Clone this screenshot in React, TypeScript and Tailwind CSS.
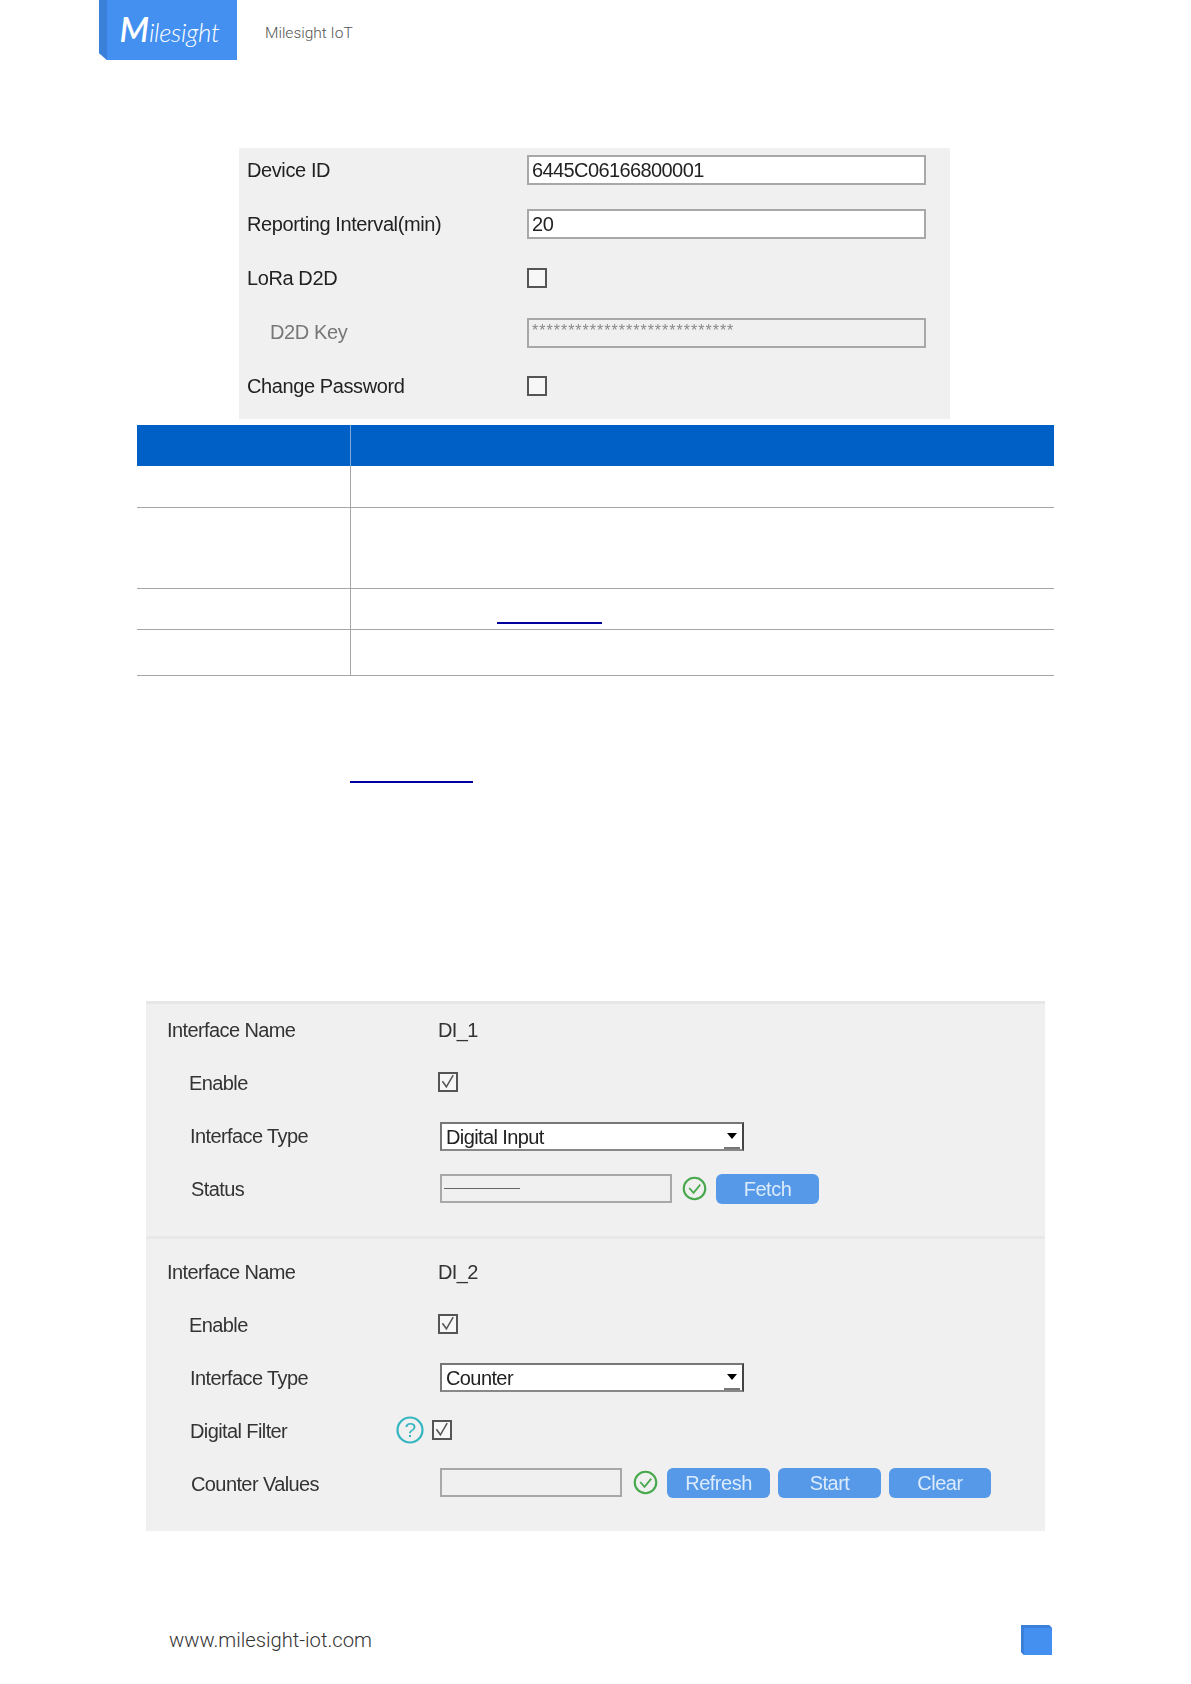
const Checkbox = ({ checked = false }: { checked?: boolean }) => (
  <div className="flex h-[20px] w-[20px] shrink-0 items-center justify-center border-2 border-[#555] bg-[#f7f7f7]">
    {checked && (
      <svg viewBox="0 0 20 20" className="h-[18px] w-[18px]" fill="none" stroke="#555" strokeWidth={1.9}>
        <path d="M3 9l5 7L16.5 1.5" />
      </svg>
    )}
  </div>
);

const OkIcon = () => (
  <svg viewBox="0 0 26 26" className="h-[25px] w-[25px] shrink-0" fill="none" stroke="#47a84c">
    <circle cx="13" cy="13" r="11.2" strokeWidth={2.2} />
    <path d="M7.5 12.5l4.5 5 7-8.5" strokeWidth={1.8} />
  </svg>
);

const Btn = ({ label, className }: { label: string; className: string }) => (
  <div className={`flex h-[30px] items-center justify-center rounded-[6px] bg-[#5599e8] text-[20px] tracking-[-0.5px] text-[#dcebfb] ${className}`}>
    {label}
  </div>
);

const Row = ({ label, labelClass, children }: { label: string; labelClass: string; children?: React.ReactNode }) => (
  <div className="flex h-[53px] items-center">
    <div className={`shrink-0 text-[#333] ${labelClass}`}>{label}</div>
    {children}
  </div>
);

const SelectBox = ({ value, className = '' }: { value: string; className?: string }) => (
  <div className={`ml-[2px] flex h-[29px] w-[304px] items-center justify-between border-2 border-[#777] border-r-[#444] border-b-[#888] bg-white pl-[4px] pr-[2px] text-[#222] ${className}`}>
    <span>{value}</span>
    <div className="flex h-full w-[16px] items-center justify-center border-b-2 border-[#777]">
      <div className="h-0 w-0 border-x-[5px] border-t-[6px] border-x-transparent border-t-black" />
    </div>
  </div>
);

const Logo = () => (
  <div className="relative flex h-[60px] w-[138px] items-center justify-center">
    <svg viewBox="0 0 138 60" className="absolute inset-0 h-full w-full">
      <path d="M0 0H138V60H8L0 53Z" fill="#4390f0" />
      <path d="M0 0H8V60L0 53Z" fill="#3a7fd8" />
    </svg>
    <span className="relative mb-[2px] flex items-baseline pl-[3px] font-['Lato',sans-serif] text-[26px] font-light italic leading-none tracking-[-0.3px] text-white">
      <span className="text-[34px] font-semibold">M</span>ilesight
    </span>
  </div>
);

export default function App() {
  return (
    <div className="h-[1684px] w-[1191px] overflow-hidden bg-white font-['Liberation_Sans',sans-serif] text-[20px] tracking-[-0.5px]">
      {/* Header */}
      <div className="flex h-[60px] items-center pl-[99px]">
        <Logo />
        <span className="ml-[28px] mt-[8px] font-['Roboto',sans-serif] text-[15.5px] font-light tracking-normal text-[#555]">Milesight IoT</span>
      </div>

      {/* Device settings */}
      <div className="ml-[239px] mt-[88px] flex h-[271px] w-[711px] flex-col gap-[10px] bg-[#f0f0f0] tracking-[-0.4px] blur-[0.4px]">
        <div className="flex h-[44px] items-center text-[#222]">
          <div className="w-[288px] pl-[8px]">Device ID</div>
          <div className="flex h-[30px] w-[399px] items-center border-2 border-[#a8a8a8] bg-white pl-[3px] tracking-[-0.6px] text-[#222]">6445C06166800001</div>
        </div>
        <div className="flex h-[44px] items-center text-[#222]">
          <div className="w-[288px] pl-[8px]">Reporting Interval(min)</div>
          <div className="flex h-[30px] w-[399px] items-center border-2 border-[#a8a8a8] bg-white pl-[3px] text-[#222]">20</div>
        </div>
        <div className="flex h-[44px] items-center text-[#222]">
          <div className="w-[288px] pl-[8px]">LoRa D2D</div>
          <Checkbox />
        </div>
        <div className="flex h-[44px] items-center text-[#777]">
          <div className="w-[288px] pl-[31px]">D2D Key</div>
          <div className="mt-[2px] flex h-[30px] w-[399px] items-start overflow-hidden border-2 border-[#a8a8a8] pl-[3px] text-[16px] leading-[22px] tracking-[1px] text-[#888]">
            ****************************
          </div>
        </div>
        <div className="flex h-[44px] items-center text-[#222]">
          <div className="w-[288px] pl-[8px]">Change Password</div>
          <Checkbox />
        </div>
      </div>

      {/* Table */}
      <div className="ml-[137px] mt-[6px] w-[917px]">
        <div className="flex h-[41px] bg-[#0060c6]">
          <div className="w-[214px] border-r border-[#7fa9d8]" />
        </div>
        <div className="flex h-[42px] border-b border-[#a6a6a6]">
          <div className="w-[214px] border-r border-[#a6a6a6]" />
        </div>
        <div className="flex h-[81px] border-b border-[#a6a6a6]">
          <div className="w-[214px] border-r border-[#a6a6a6]" />
        </div>
        <div className="flex h-[41px] border-b border-[#a6a6a6]">
          <div className="w-[214px] border-r border-[#a6a6a6]" />
          <div className="ml-[146px] mt-[33px] h-[2px] w-[105px] bg-[#0000a0]" />
        </div>
        <div className="flex h-[46px] border-b border-[#a6a6a6]">
          <div className="w-[214px] border-r border-[#a6a6a6]" />
        </div>
      </div>

      <div className="ml-[350px] mt-[105px] h-[2px] w-[123px] bg-[#0000a0]" />

      {/* Interface settings */}
      <div className="ml-[146px] mt-[218px] w-[899px] bg-[#e8e8e8] tracking-[-0.6px] text-[#333] blur-[0.4px]">
        <div className="h-[235px] border-t-[3px] border-[#e6e6e6] bg-[#f0f0f0]">
          <Row label="Interface Name" labelClass="mb-[2px] w-[292px] pl-[21px]"><span className="mb-[2px]">DI_1</span></Row>
          <Row label="Enable" labelClass="mb-[2px] w-[292px] pl-[43px]"><div className="mb-[4px]"><Checkbox checked /></div></Row>
          <Row label="Interface Type" labelClass="mb-[2px] w-[292px] pl-[44px]"><SelectBox value="Digital Input" /></Row>
          <Row label="Status" labelClass="mb-[2px] w-[292px] pl-[45px]">
            <div className="mb-[2px] flex items-center">
              <div className="ml-[2px] flex h-[29px] w-[232px] items-center border-2 border-[#a8a8a8] pl-[2px]">
                <div className="h-[1px] w-[76px] bg-[#666]" />
              </div>
              <div className="ml-[10px]"><OkIcon /></div>
              <Btn label="Fetch" className="ml-[9px] w-[103px]" />
            </div>
          </Row>
        </div>
        <div className="mt-[3px] h-[292px] bg-[#f0f0f0] pt-[5px]">
          <Row label="Interface Name" labelClass="mt-[2px] w-[292px] pl-[21px]"><span className="mt-[2px]">DI_2</span></Row>
          <Row label="Enable" labelClass="mt-[2px] w-[292px] pl-[43px]"><Checkbox checked /></Row>
          <Row label="Interface Type" labelClass="mt-[2px] w-[292px] pl-[44px]"><SelectBox value="Counter" className="mt-[2px]" /></Row>
          <Row label="Digital Filter" labelClass="mt-[2px] w-[250px] pl-[44px]">
            <svg viewBox="0 0 28 28" className="h-[28px] w-[28px] shrink-0" fill="none" stroke="#35b5c0">
              <circle cx="14" cy="14" r="12.5" strokeWidth={2.2} />
              <text x="14" y="21" textAnchor="middle" fontSize="21" fill="#35b5c0" stroke="none" fontFamily="Liberation Sans">?</text>
            </svg>
            <div className="ml-[8px]"><Checkbox checked /></div>
          </Row>
          <Row label="Counter Values" labelClass="mt-[2px] w-[292px] pl-[45px]">
            <div className="ml-[2px] h-[29px] w-[182px] border-2 border-[#a8a8a8]" />
            <div className="ml-[11px]"><OkIcon /></div>
            <Btn label="Refresh" className="ml-[9px] w-[103px]" />
            <Btn label="Start" className="ml-[8px] w-[103px]" />
            <Btn label="Clear" className="ml-[8px] w-[102px]" />
          </Row>
        </div>
      </div>

      {/* Footer */}
      <div className="mt-[94px] flex items-center justify-between pl-[169px] pr-[139px]">
        <span className="font-['Roboto',sans-serif] text-[20.2px] font-light tracking-normal text-[#333]">www.milesight-iot.com</span>
        <svg viewBox="0 0 31 30" className="h-[30px] w-[31px]">
          <path d="M0 0H28L31 3V30H3L0 27Z" fill="#4390f0" />
          <path d="M0 0H28L31 3H3V30L0 27Z" fill="#3a7fd8" />
        </svg>
      </div>
    </div>
  );
}
